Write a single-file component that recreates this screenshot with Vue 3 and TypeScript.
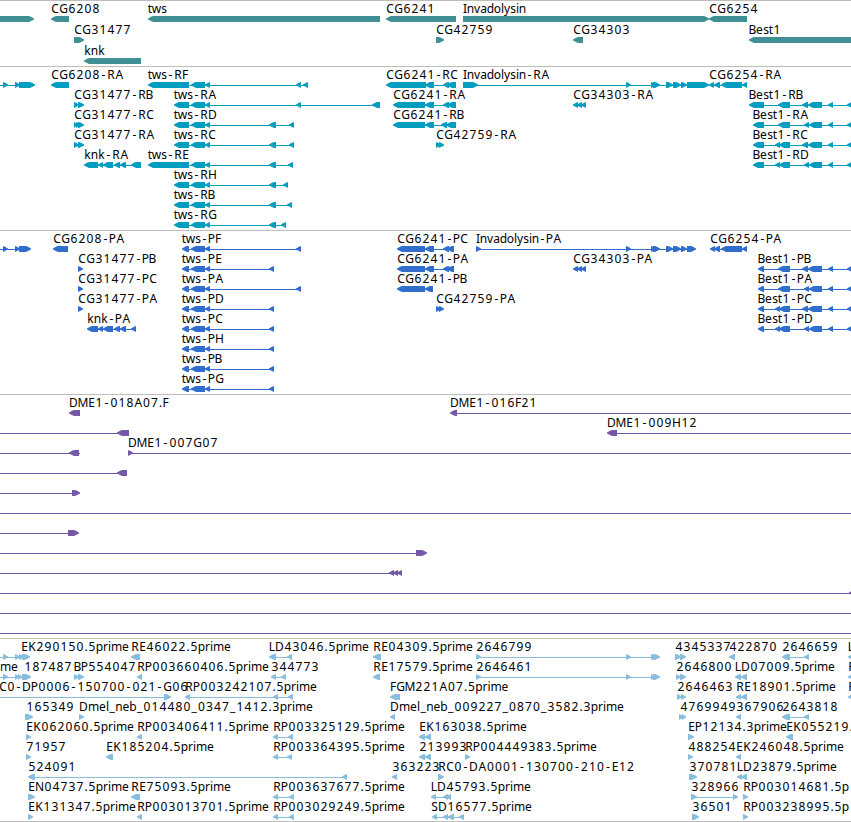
<script setup lang="ts">
/**
 * Genome region view: stacked tracks of genes, transcripts,
 * proteins, clone ends and EST alignments.
 */

type Span = [number, number];

interface Feature {
    row: number;
    label: string;
    /** Left edge of the label */
    x: number;
    dir: '<' | '>';
    exons: Span[];
    /** Connector line; defaults to the extent of the exons */
    line?: Span;
}

interface Track {
    name: string;
    height: number;
    pitch: number;
    features: Feature[];
}

const WIDTH = 851;
const OFF_LEFT = -10;
const OFF_RIGHT = 861;

function f(row: number, label: string, x: number, dir: '<' | '>', exons: Span[], line?: Span): Feature {
    return { row, label, x, dir, exons, line };
}

// Exon groups shared by several isoforms
const twsMid: Span[] = [[191, 205], [205, 210]];
const invTail: Span[] = [[626, 631], [651, 656], [653, 660], [666, 673], [673, 681], [681, 687]];
const cg34303: Span[] = [[573, 578], [577, 582], [581, 586]];
const bestTail: Span[] = [[828, 833], [847, 857]];
const bestB: Span[] = [[778, 790], [802, 808], [808, 822], ...bestTail];
const bestA: Span[] = [[778, 790], [804, 809], [809, 822], ...bestTail];
const bestC: Span[] = [[775, 780], [779, 790], [802, 808], [808, 822], ...bestTail];
const bestD: Span[] = [[775, 780], [779, 790], [804, 809], [809, 822], ...bestTail];
const knkMid: Span[] = [[98, 103], [103, 113], [114, 120], [120, 126]];
const est2646: Span[] = [[476, 481], [626, 631], [651, 656], [653, 660]];

const tws = (row: number, iso: string, x: number, ...rest: Span[]) =>
    f(row, 'tws-' + iso, x, '<', [[x, 189], ...twsMid, ...rest]);

const tracks: Track[] = [
    {
        name: 'gene', height: 66, pitch: 21,
        features: [
            f(0, '', 0, '>', [[OFF_LEFT, 34]]),
            f(0, 'CG6208', 51, '<', [[51, 69]]),
            f(0, 'tws', 148, '<', [[148, 380]]),
            f(0, 'CG6241', 386, '<', [[386, 456]]),
            f(0, 'Invadolysin', 463, '>', [[463, 709]]),
            f(0, 'CG6254', 709, '<', [[709, 747]]),
            f(1, 'CG31477', 74, '>', [[74, 84]]),
            f(1, 'CG42759', 436, '>', [[436, 444]]),
            f(1, 'CG34303', 573, '<', [[573, 583]]),
            f(1, 'Best1', 749, '<', [[749, OFF_RIGHT]]),
            f(2, 'knk', 84, '<', [[84, 141]]),
        ],
    },
    {
        name: 'transcript', height: 164, pitch: 20,
        features: [
            f(0, '', 0, '>', [[3, 8], [15, 20], [19, 35]], [OFF_LEFT, 34]),
            f(0, 'CG6208-RA', 51, '<', [[51, 69]]),
            tws(0, 'RF', 148, [296, 301], [303, 308]),
            f(0, 'CG6241-RC', 386, '<', [[386, 426], [425, 434], [443, 449], [447, 456]]),
            f(0, 'Invadolysin-RA', 463, '>', [[463, 478], ...invTail, [687, 709]]),
            f(0, 'CG6254-RA', 709, '<', [[709, 714], [714, 720], [721, 742], [742, 747]]),
            f(1, 'CG31477-RB', 74, '>', [[74, 79], [78, 84]]),
            tws(1, 'RA', 174, [296, 301], [372, 380]),
            f(1, 'CG6241-RA', 393, '<', [[393, 425], [425, 434], [443, 449], [447, 456]]),
            f(1, 'CG34303-RA', 573, '<', cg34303),
            f(1, 'Best1-RB', 749, '<', [[749, 764], ...bestB]),
            f(2, 'CG31477-RC', 74, '>', [[74, 77], [76, 80], [78, 84]]),
            tws(2, 'RD', 174, [269, 276], [289, 294]),
            f(2, 'CG6241-RB', 393, '<', [[393, 425], [425, 434], [441, 447], [446, 456]]),
            f(2, 'Best1-RA', 753, '<', [[753, 764], ...bestA]),
            f(3, 'CG31477-RA', 74, '>', [[74, 79], [78, 84]]),
            tws(3, 'RC', 174, [269, 276], [289, 294]),
            f(3, 'CG42759-RA', 436, '>', [[436, 441], [439, 444]]),
            f(3, 'Best1-RC', 753, '<', [[753, 764], ...bestC]),
            f(4, 'knk-RA', 84, '<', [[84, 98], ...knkMid, [131, 141]]),
            tws(4, 'RE', 148, [269, 276], [288, 293]),
            f(4, 'Best1-RD', 753, '<', [[753, 764], ...bestD]),
            tws(5, 'RH', 174, [269, 276], [283, 288]),
            tws(6, 'RB', 174, [269, 276], [287, 292]),
            tws(7, 'RG', 174, [269, 276], [281, 286]),
        ],
    },
    {
        name: 'protein', height: 164, pitch: 20,
        features: [
            f(0, '', 0, '>', [[3, 8], [15, 20], [19, 31]], [OFF_LEFT, 30]),
            f(0, 'CG6208-PA', 53, '<', [[53, 68]]),
            tws(0, 'PF', 182, [296, 301]),
            f(0, 'CG6241-PC', 397, '<', [[397, 425], [425, 434], [443, 449], [447, 454]]),
            f(0, 'Invadolysin-PA', 476, '>', [[476, 481], ...invTail, [687, 696]]),
            f(0, 'CG6254-PA', 710, '<', [[710, 715], [714, 720], [721, 742], [742, 747]]),
            f(1, 'CG31477-PB', 78, '>', [[78, 83]]),
            tws(1, 'PE', 182, [269, 274]),
            f(1, 'CG6241-PA', 397, '<', [[397, 425], [425, 434], [443, 449], [447, 454]]),
            f(1, 'CG34303-PA', 573, '<', cg34303),
            f(1, 'Best1-PB', 758, '<', [[758, 764], ...bestB]),
            f(2, 'CG31477-PC', 78, '>', [[78, 83]]),
            tws(2, 'PA', 182, [296, 301]),
            f(2, 'CG6241-PB', 397, '<', [[397, 425], [425, 433]]),
            f(2, 'Best1-PA', 758, '<', [[758, 764], ...bestA]),
            f(3, 'CG31477-PA', 78, '>', [[78, 83]]),
            tws(3, 'PD', 182, [269, 274]),
            f(3, 'CG42759-PA', 436, '>', [[436, 441], [439, 444]]),
            f(3, 'Best1-PC', 758, '<', [[758, 764], ...bestC]),
            f(4, 'knk-PA', 87, '<', [[87, 98], ...knkMid, [131, 136]]),
            tws(4, 'PC', 182, [269, 274]),
            f(4, 'Best1-PD', 758, '<', [[758, 764], ...bestD]),
            tws(5, 'PH', 182, [269, 274]),
            tws(6, 'PB', 182, [269, 274]),
            tws(7, 'PG', 182, [269, 274]),
        ],
    },
    {
        name: 'clone', height: 244, pitch: 20,
        features: [
            f(0, 'DME1-018A07.F', 69, '<', [[69, 80]]),
            f(0, 'DME1-016F21', 450, '<', [[450, 457]], [452, OFF_RIGHT]),
            f(1, '', 0, '<', [[117, 129]], [OFF_LEFT, 125]),
            f(1, 'DME1-009H12', 607, '<', [[607, 617]], [609, OFF_RIGHT]),
            f(2, '', 0, '<', [[69, 79]], [OFF_LEFT, 80]),
            f(2, 'DME1-007G07', 128, '>', [[128, 133]], [130, OFF_RIGHT]),
            f(3, '', 0, '<', [[117, 127]], [OFF_LEFT, 125]),
            f(4, '', 0, '>', [[72, 80]], [OFF_LEFT, 75]),
            f(5, '', 0, '>', [], [OFF_LEFT, OFF_RIGHT]),
            f(6, '', 0, '>', [[68, 79]], [OFF_LEFT, 75]),
            f(7, '', 0, '>', [[416, 427]], [OFF_LEFT, 425]),
            f(8, '', 0, '<', [[389, 394], [393, 398], [397, 402]], [OFF_LEFT, 400]),
            f(9, '', 0, '<', [[849, 858]], [OFF_LEFT, OFF_RIGHT]),
            f(10, '', 0, '>', [], [OFF_LEFT, OFF_RIGHT]),
            f(11, '', 0, '>', [], [OFF_LEFT, OFF_RIGHT]),
        ],
    },
    {
        name: 'est', height: 183, pitch: 20,
        features: [
            f(0, 'EK290150.5prime', 21, '>', [[3, 8], [15, 20], [19, 24], [22, 30]], [OFF_LEFT, 29]),
            f(0, 'RE46022.5prime', 131, '<', [[131, 140]]),
            f(0, 'LD43046.5prime', 269, '<', [[269, 276], [287, 292]]),
            f(0, 'RE04309.5prime', 373, '<', [[373, 381]]),
            f(0, '2646799', 476, '>', est2646),
            f(0, '4345337', 675, '>', [[675, 681], [680, 686]]),
            f(0, '422870', 729, '<', [[729, 735]]),
            f(0, '2646659', 782, '<', [[782, 790], [804, 809]]),
            f(0, 'L', 848, '<', [[848, 857]]),
            f(1, 'me', 0, '>', [[3, 8]], [OFF_LEFT, 8]),
            f(1, '187487', 24, '>', [[15, 19], [18, 22], [22, 31]], [8, 30]),
            f(1, 'BP554047', 74, '>', [[74, 79], [78, 84]]),
            f(1, 'RP003660406.5prime', 137, '<', [[137, 142]]),
            f(1, '344773', 271, '<', [[271, 276], [281, 286]]),
            f(1, 'RE17579.5prime', 373, '<', [[373, 380]]),
            f(1, '2646461', 476, '>', est2646),
            f(1, '2646800', 676, '>', [[676, 681], [680, 686]]),
            f(1, 'LD07009.5prime', 735, '<', [[735, 741], [741, 747]]),
            f(1, 'R', 848, '<', [[848, 857]]),
            f(2, 'C0-DP0006-150700-021-G06', -1, '>', [[164, 171]], [OFF_LEFT, 168]),
            f(2, 'RP003242107.5prime', 185, '<', [[185, 190], [273, 278], [288, 293]]),
            f(2, 'FGM221A07.5prime', 390, '<', [[390, 400]]),
            f(2, '2646463', 677, '>', [[677, 682], [681, 686]]),
            f(2, 'RE18901.5prime', 736, '<', [[736, 741], [741, 747]]),
            f(2, 'R', 848, '<', [[848, 857]]),
            f(3, '165349', 26, '>', [[25, 33]]),
            f(3, 'Dmel_neb_014480_0347_1412.3prime', 79, '>', [[79, 84]]),
            f(3, 'Dmel_neb_009227_0870_3582.3prime', 390, '<', [[390, 395]]),
            f(3, '4769949', 680, '>', [[679, 684], [682, 686]]),
            f(3, '367906', 736, '<', [[736, 741]]),
            f(3, '2643818', 782, '<', [[782, 790], [804, 809]]),
            f(4, 'EK062060.5prime', 26, '>', [[26, 31]]),
            f(4, 'RP003406411.5prime', 137, '<', [[137, 142]]),
            f(4, 'RP003325129.5prime', 273, '<', [[273, 278], [288, 293]]),
            f(4, 'EK163038.5prime', 419, '<', [[419, 425], [425, 431]]),
            f(4, 'EP12134.3prime', 688, '>', [[688, 694]]),
            f(4, 'EK055219.', 786, '<', [[786, 793]]),
            f(5, '71957', 26, '>', [[26, 31]]),
            f(5, 'EK185204.5prime', 106, '<', [[106, 113]]),
            f(5, 'RP003364395.5prime', 273, '<', [[273, 278], [287, 292]]),
            f(5, '213993', 419, '<', [[419, 425], [425, 431]]),
            f(5, 'RP004449383.5prime', 465, '>', [[465, 470]]),
            f(5, '488254', 688, '>', [[688, 693]]),
            f(5, 'EK246048.5prime', 736, '<', [[736, 741]]),
            f(6, '524091', 28, '<', [[28, 35], [342, 347]]),
            f(6, '363223', 392, '<', [[392, 397]]),
            f(6, 'RC0-DA0001-130700-210-E12', 438, '>', [[438, 444]]),
            f(6, '370781', 689, '>', [[689, 697]]),
            f(6, 'LD23879.5prime', 737, '<', [[737, 742], [741, 747]]),
            f(7, 'EN04737.5prime', 28, '>', [[28, 35]]),
            f(7, 'RE75093.5prime', 131, '<', [[131, 140]]),
            f(7, 'RP003637677.5prime', 273, '<', [[273, 278], [289, 294]]),
            f(7, 'LD45793.5prime', 431, '<', [[431, 436], [443, 448], [446, 451]]),
            f(7, '328966', 691, '>', [[691, 697], [733, 738]]),
            f(7, 'RP003014681.5p', 743, '>', [[743, 748]]),
            f(8, 'EK131347.5prime', 28, '>', [[28, 33]]),
            f(8, 'RP003013701.5prime', 137, '<', [[137, 142]]),
            f(8, 'RP003029249.5prime', 273, '<', [[273, 278], [289, 294]]),
            f(8, 'SD16577.5prime', 431, '<', [[432, 437], [443, 448], [448, 454], [459, 464]]),
            f(8, '36501', 692, '>', [[692, 699]]),
            f(8, 'RP003238995.5p', 743, '>', [[743, 748]]),
        ],
    },
];

// Cell width per character, whole pixels where possible
const ADVANCE: Record<string, number> = {
    A: 8.5, B: 7, C: 8, D: 9, E: 7, F: 6, G: 9, H: 9, I: 4, K: 8, L: 6, M: 10, N: 9, P: 7, R: 8, S: 7,
    a: 7, b: 7, d: 7, e: 7, i: 3, k: 7, l: 3, m: 11, n: 7, o: 7, p: 7, r: 5, s: 6, t: 4, v: 6, w: 9, y: 6,
    '-': 7, '_': 6.5, '.': 4,
};

/** Centre of every character cell in a label */
function cells(label: string, x: number): string {
    let pos = x;
    return [...label].map(ch => {
        const w = ADVANCE[ch] ?? 8;
        const centre = pos + w / 2;
        pos += w;
        return centre;
    }).join(' ');
}

/** Block with a pointed end, 6px tall */
function arrow([a, b]: Span, dir: '<' | '>'): string {
    const head = Math.min(5, b - a);
    const tip = dir === '<' ? a : b;
    const tail = dir === '<' ? b : a;
    const s = dir === '<' ? 1 : -1;
    return `M${tip} 2.6L${tip + s * head * 0.6} .7L${tip + s * head} 0H${tail}V6H${tip + s * head}L${tip + s * head * 0.6} 5L${tip} 3.6Z`;
}

function lineOf(ft: Feature): Span {
    return ft.line ?? [ft.exons[0][0] + 1, ft.exons[ft.exons.length - 1][1] - 1];
}
</script>

<template>
    <main class="region">
        <section v-for="track in tracks" :key="track.name" class="track" :class="track.name">
            <svg class="canvas" :width="WIDTH" :height="track.height - 1">
                <g
                    v-for="(ft, i) in track.features"
                    :key="i"
                    :transform="`translate(0 ${ft.row * track.pitch})`"
                >
                    <rect
                        v-if="ft.line || ft.exons.length > 1"
                        class="intron"
                        :x="lineOf(ft)[0]"
                        y="18"
                        :width="lineOf(ft)[1] - lineOf(ft)[0]"
                        height="1"
                    />
                    <g transform="translate(0 15)">
                        <path v-for="(ex, j) in ft.exons" :key="j" class="exon" :d="arrow(ex, ft.dir)" />
                    </g>
                    <text v-if="ft.label" class="label" :x="cells(ft.label, ft.x)" y="12">{{ ft.label }}</text>
                </g>
            </svg>
        </section>
    </main>
</template>

<style>
body {
    background: #fff;
}
</style>

<style scoped>
.region {
    display: flex;
    flex-direction: column;
    width: 851px;
    height: 822px;
    box-sizing: border-box;
    overflow: hidden;
    background: #fff;
    border-bottom: 1px solid #bebebe;
}
.track {
    border-top: 1px solid #bebebe;
}
.canvas {
    display: block;
    overflow: hidden;
}

/* ── Track colours ──────────────────────────────────── */
.gene { --ink: #3f8f94; --line: #3f8f94; }
.transcript { --ink: #009dbf; --line: #009dbf; }
.protein { --ink: #316dcd; --line: #316dcd; }
.clone { --ink: #7558a6; --line: #6e57a5; }
.est { --ink: #89bddd; --line: #89bddd; }

.exon {
    fill: var(--ink);
}
.intron {
    fill: var(--line);
    shape-rendering: crispEdges;
}
.label {
    font-family: 'Noto Sans', 'DejaVu Sans', sans-serif;
    font-size: 12px;
    text-anchor: middle;
    fill: #000;
}
</style>
